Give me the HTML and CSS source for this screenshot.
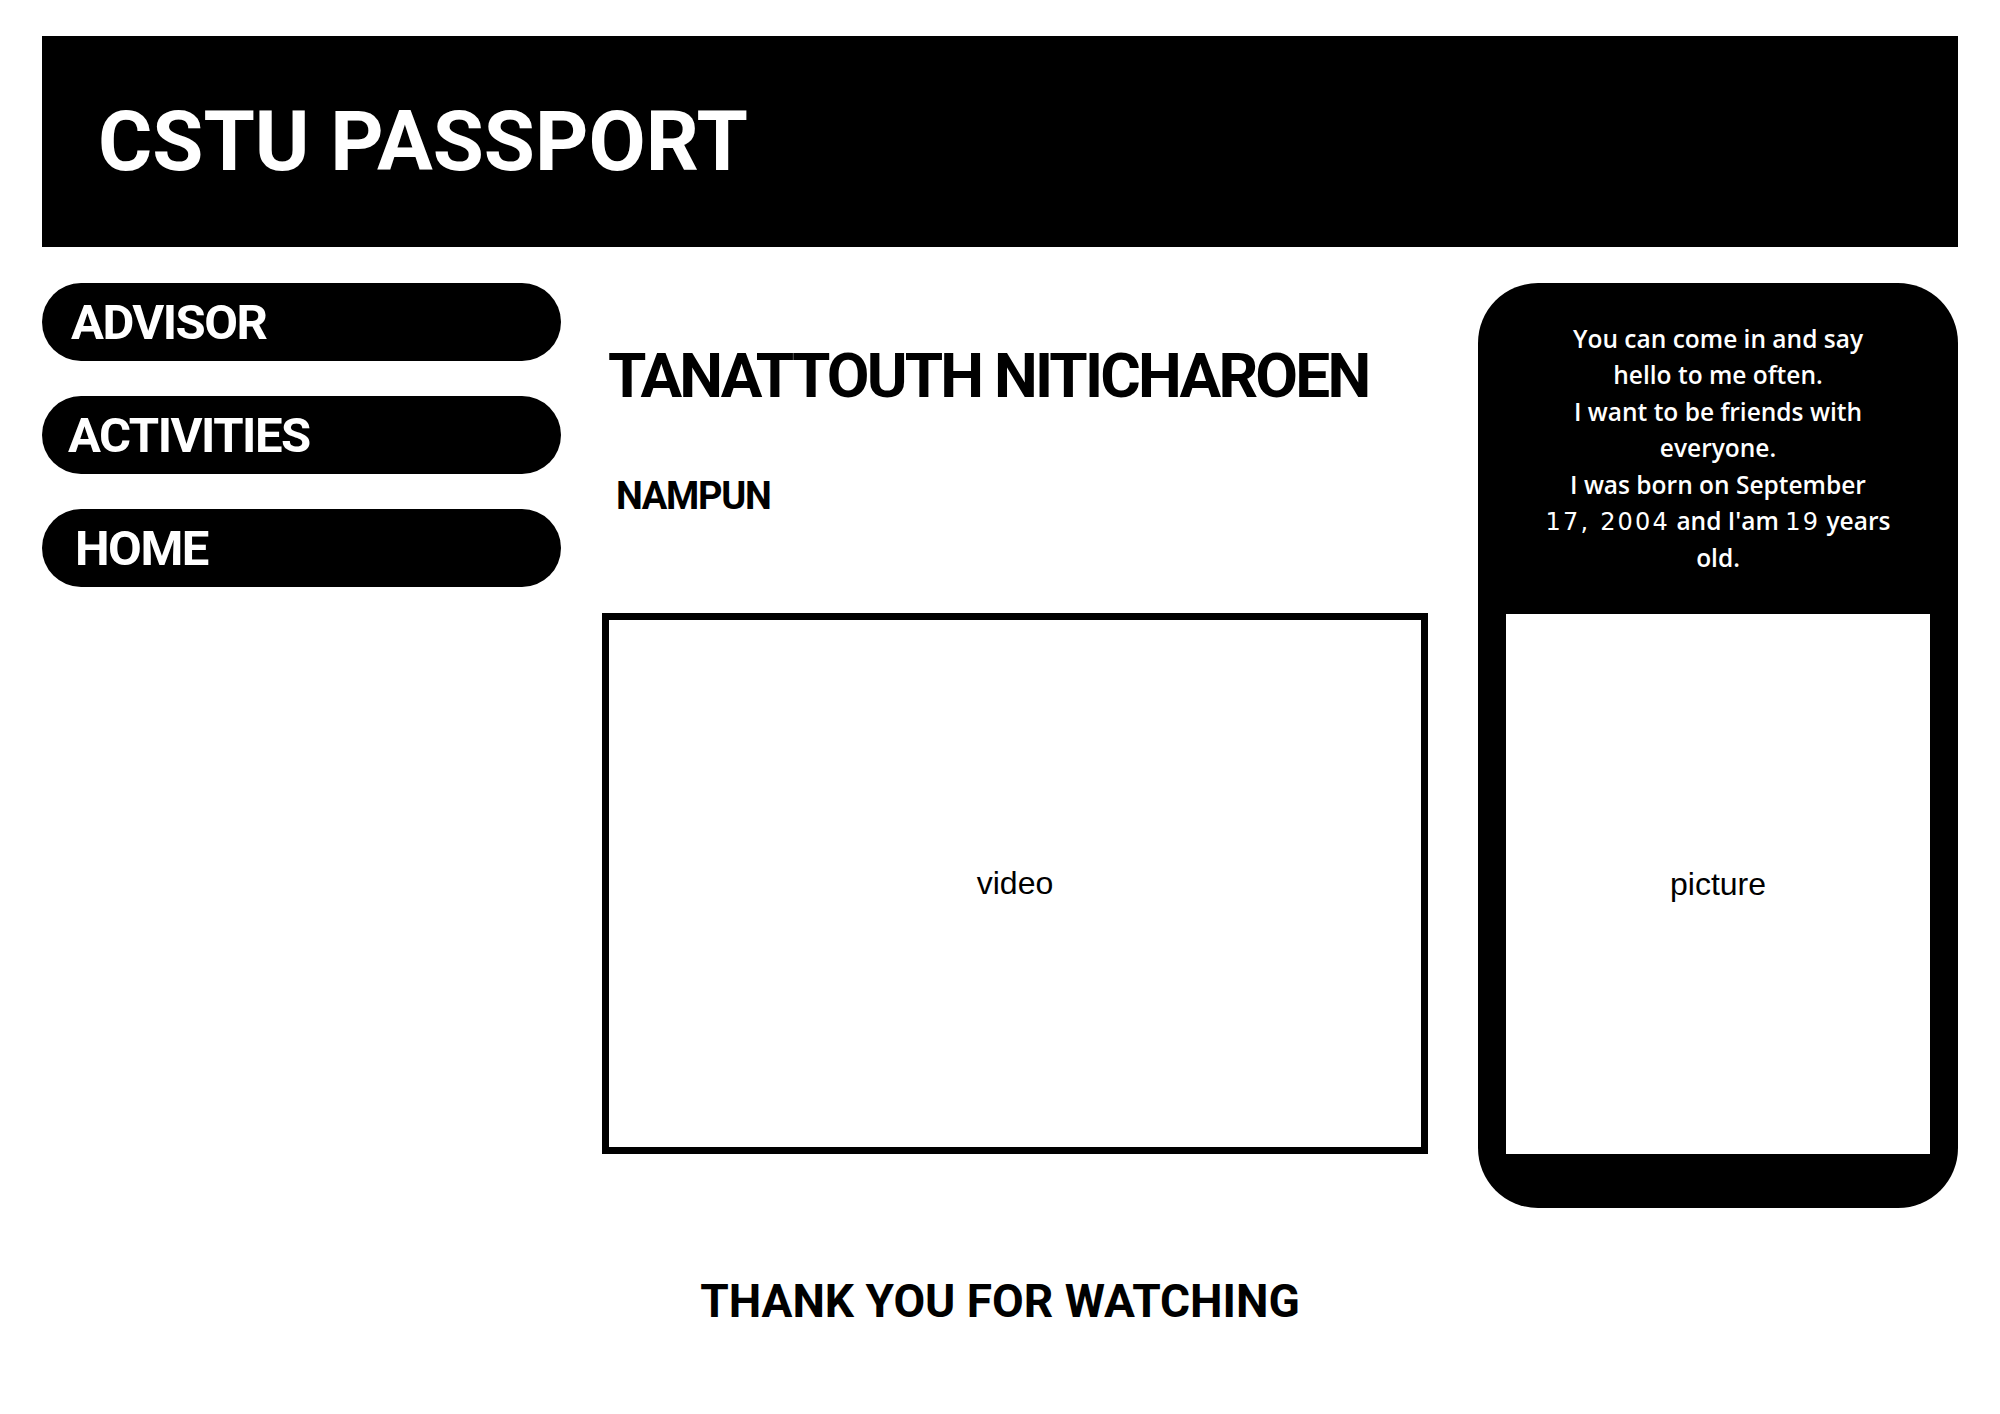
FILE: index.html
```html
<!DOCTYPE html>
<html>

<head>
    <meta charset="UTF-8">
    <meta name="viewport" content="width=device-width, initial-scale=1.0">
    <title>CSTU Passport</title>
    <link rel="stylesheet" href="styles.css">
</head>

<body>
    <div class="page">
        <header class="top-bar">
            <h1>CSTU PASSPORT</h1>
        </header>

        <div class="content">
            <nav class="side-nav">
                <a href="#" class="nav-pill nav-advisor">ADVISOR</a>
                <a href="#" class="nav-pill nav-activities">ACTIVITIES</a>
                <a href="#" class="nav-pill nav-home">HOME</a>
            </nav>

            <main class="main-col">
                <h2 id="fullName">TANATTOUTH NITICHAROEN</h2>
                <p id="nickName">NAMPUN</p>
                <div class="video-box">video</div>
            </main>

            <aside class="about-card">
                <p class="about-text">You can come in and say<br>hello to me often.<br> I want to be friends with<br>everyone.<br> I was born on September<br><span class="num">17, 2004</span> and I'am <span class="num">19</span> years<br>old.</p>
                <div class="picture-box">picture</div>
            </aside>
        </div>

        <footer class="thanks">THANK YOU FOR WATCHING</footer>
    </div>
</body>
</html>
```

FILE: styles.css
```css
body {
    margin: 0;
    background-color: #ffffff;
    font-family: Roboto, "Liberation Sans", Arial, sans-serif;
    color: #000;
}

.page {
    padding: 36px 42px;
}

.top-bar {
    display: flex;
    align-items: center;
    height: 211px;
    background-color: #000;
    padding-left: 56px;
    box-sizing: border-box;
}

.top-bar h1 {
    margin: 0;
    color: #fff;
    font-size: 83px;
    font-weight: bold;
    line-height: 1;
}

.content {
    display: grid;
    grid-template-columns: 519px 1fr 480px;
    align-items: start;
    column-gap: 41px;
    margin-top: 36px;
}

.side-nav {
    display: flex;
    flex-direction: column;
    gap: 35px;
}

.nav-pill {
    display: flex;
    align-items: center;
    height: 78px;
    border-radius: 39px;
    background-color: #000;
    color: #fff;
    text-decoration: none;
    font-size: 49px;
    font-weight: bold;
    line-height: 1;
    letter-spacing: -1.5px;
    box-sizing: border-box;
}

.nav-advisor {
    padding-left: 29px;
}

.nav-activities {
    padding-left: 26px;
}

.nav-home {
    padding-left: 33px;
}

.main-col {
    display: flex;
    flex-direction: column;
}

#fullName {
    margin: 62px 0 0 0;
    padding-left: 6px;
    font-size: 62px;
    font-weight: bold;
    line-height: 1;
    letter-spacing: -2.8px;
}

#nickName {
    margin: 70px 0 0 0;
    padding-left: 14px;
    font-size: 38px;
    font-weight: bold;
    line-height: 1;
    letter-spacing: -1.3px;
}

.video-box {
    display: flex;
    align-items: center;
    justify-content: center;
    width: 826px;
    height: 541px;
    margin-top: 98px;
    border: 7px solid #000;
    box-sizing: border-box;
    font-family: "Liberation Sans", Arial, sans-serif;
    font-size: 32px;
}

.about-card {
    display: flex;
    flex-direction: column;
    height: 925px;
    background-color: #000;
    border-radius: 60px;
    padding: 38px 28px 54px 28px;
    box-sizing: border-box;
}

.about-text {
    margin: 0;
    color: #fff;
    text-align: center;
    font-family: "Open Sans", "Liberation Sans", sans-serif;
    font-weight: 600;
    font-size: 24.5px;
    line-height: 36.4px;
}

.about-text .num {
    font-family: "DejaVu Sans", sans-serif;
    font-weight: normal;
    font-size: 24px;
    letter-spacing: 2.2px;
}

.picture-box {
    display: flex;
    align-items: center;
    justify-content: center;
    height: 540px;
    margin-top: auto;
    background-color: #fff;
    font-family: "Liberation Sans", Arial, sans-serif;
    font-size: 32px;
}

.thanks {
    margin-top: 70px;
    text-align: center;
    font-size: 46px;
    font-weight: bold;
    line-height: 1;
}
```
